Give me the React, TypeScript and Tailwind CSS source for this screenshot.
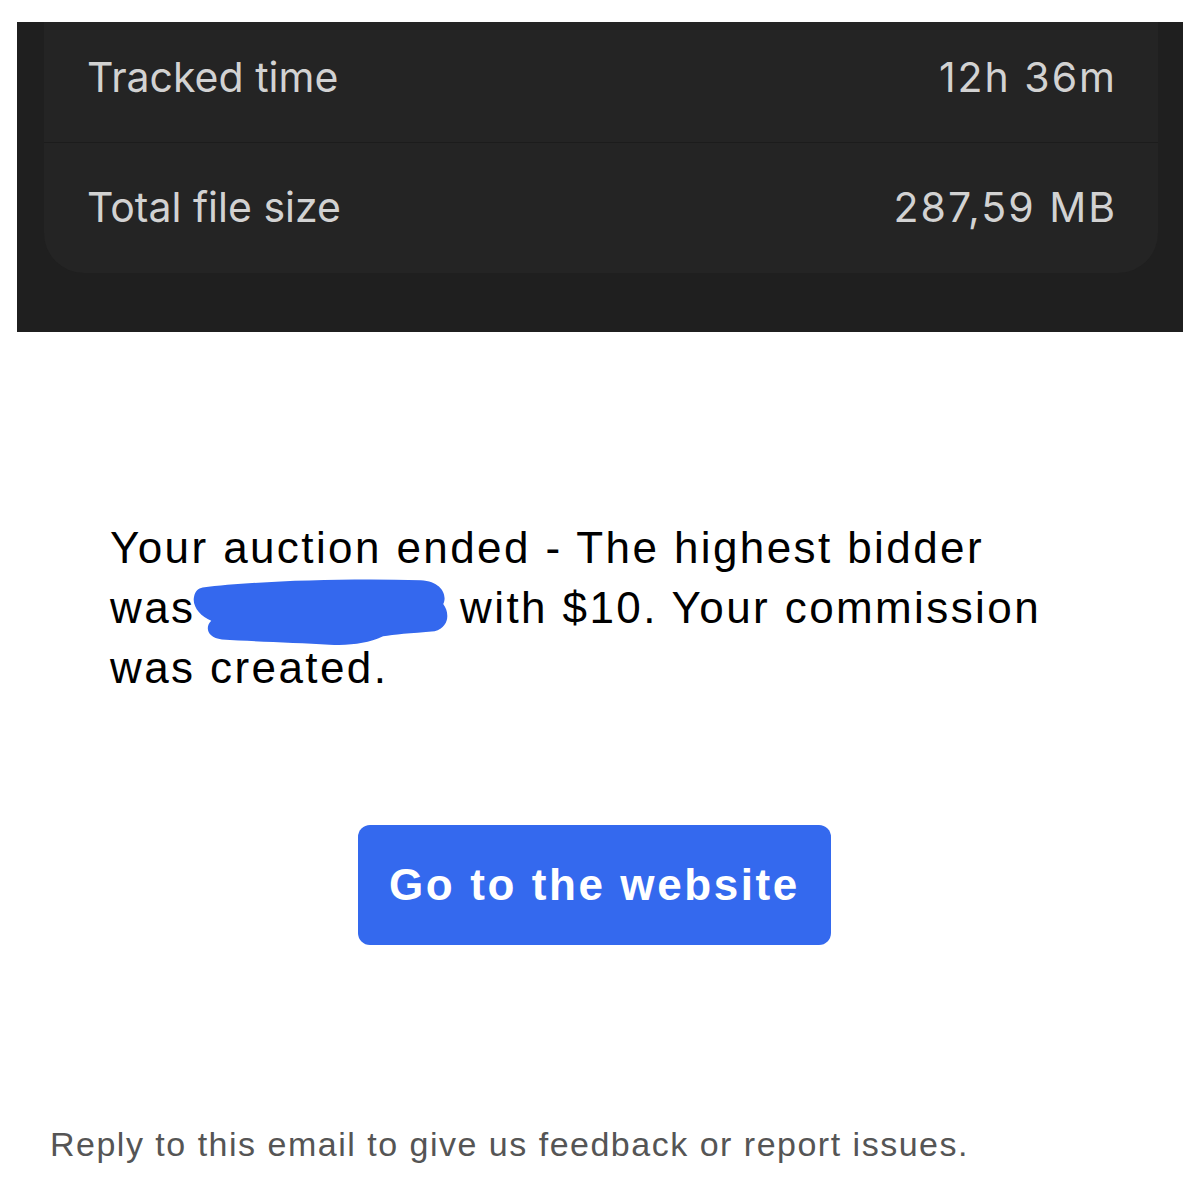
export default function App() {
  return (
    <main className="min-h-screen w-[1200px] bg-white pt-[22px]">
      {/* dark stats panel, cut off at the top */}
      <section className="mx-[17px] h-[310px] overflow-hidden bg-[#1f1f1f] px-[27px] pr-[25px]">
        <div className="rounded-b-[40px] bg-[#242424] font-['Inter',sans-serif] text-[41px] text-[#d2d2d2]">
          <div className="flex h-[120px] items-center justify-between pb-[8px] pl-[43px] pr-[41px]">
            <span>Tracked time</span>
            <span className="tracking-[2px]">12h 36m</span>
          </div>
          <div className="flex h-[131px] items-center justify-between border-t border-[#1c1c1c] pl-[43px] pr-[41px]">
            <span>Total file size</span>
            <span className="tracking-[2px]">287,59 MB</span>
          </div>
        </div>
      </section>

      {/* email body */}
      <div className="font-['Liberation_Sans',Arial,sans-serif]">
        <p className="ml-[110px] mt-[186px] w-[1000px] text-[44px] leading-[60px] tracking-[2.4px] text-black">
          Your auction ended - The highest bidder
          <br />
          was
          <span className="relative inline-block h-[10px] w-[250px] align-baseline">
            {/* redaction scribble */}
            <svg
              className="absolute left-[-16px] top-[-38px]"
              width="290"
              height="78"
              viewBox="0 0 270 75"
              preserveAspectRatio="none"
            >
              <path
                d="M22 12 C70 6 150 3 225 5 C245 6 250 20 246 28 C252 36 252 50 238 54 C215 56 200 57 190 59 C175 66 160 68 140 67 C110 65 70 64 40 62 C26 60 24 50 30 44 C20 40 12 30 14 21 C15 15 18 13 22 12 Z"
                fill="#3468ee"
              />
            </svg>
          </span>
          {' '}with $10. Your commission
          <br />
          was created.
        </p>

        <div className="mt-[127px] flex justify-center pr-[11px]">
          <a
            href="#"
            className="flex h-[120px] w-[473px] items-center justify-center rounded-[12px] bg-[#3469ee] text-[44px] font-bold tracking-[2.6px] text-white"
          >
            Go to the website
          </a>
        </div>

        <p className="ml-[50px] mt-[178px] text-[34px] leading-[42px] tracking-[1.5px] text-[#555555]">
          Reply to this email to give us feedback or report issues.
        </p>
      </div>
    </main>
  )
}
